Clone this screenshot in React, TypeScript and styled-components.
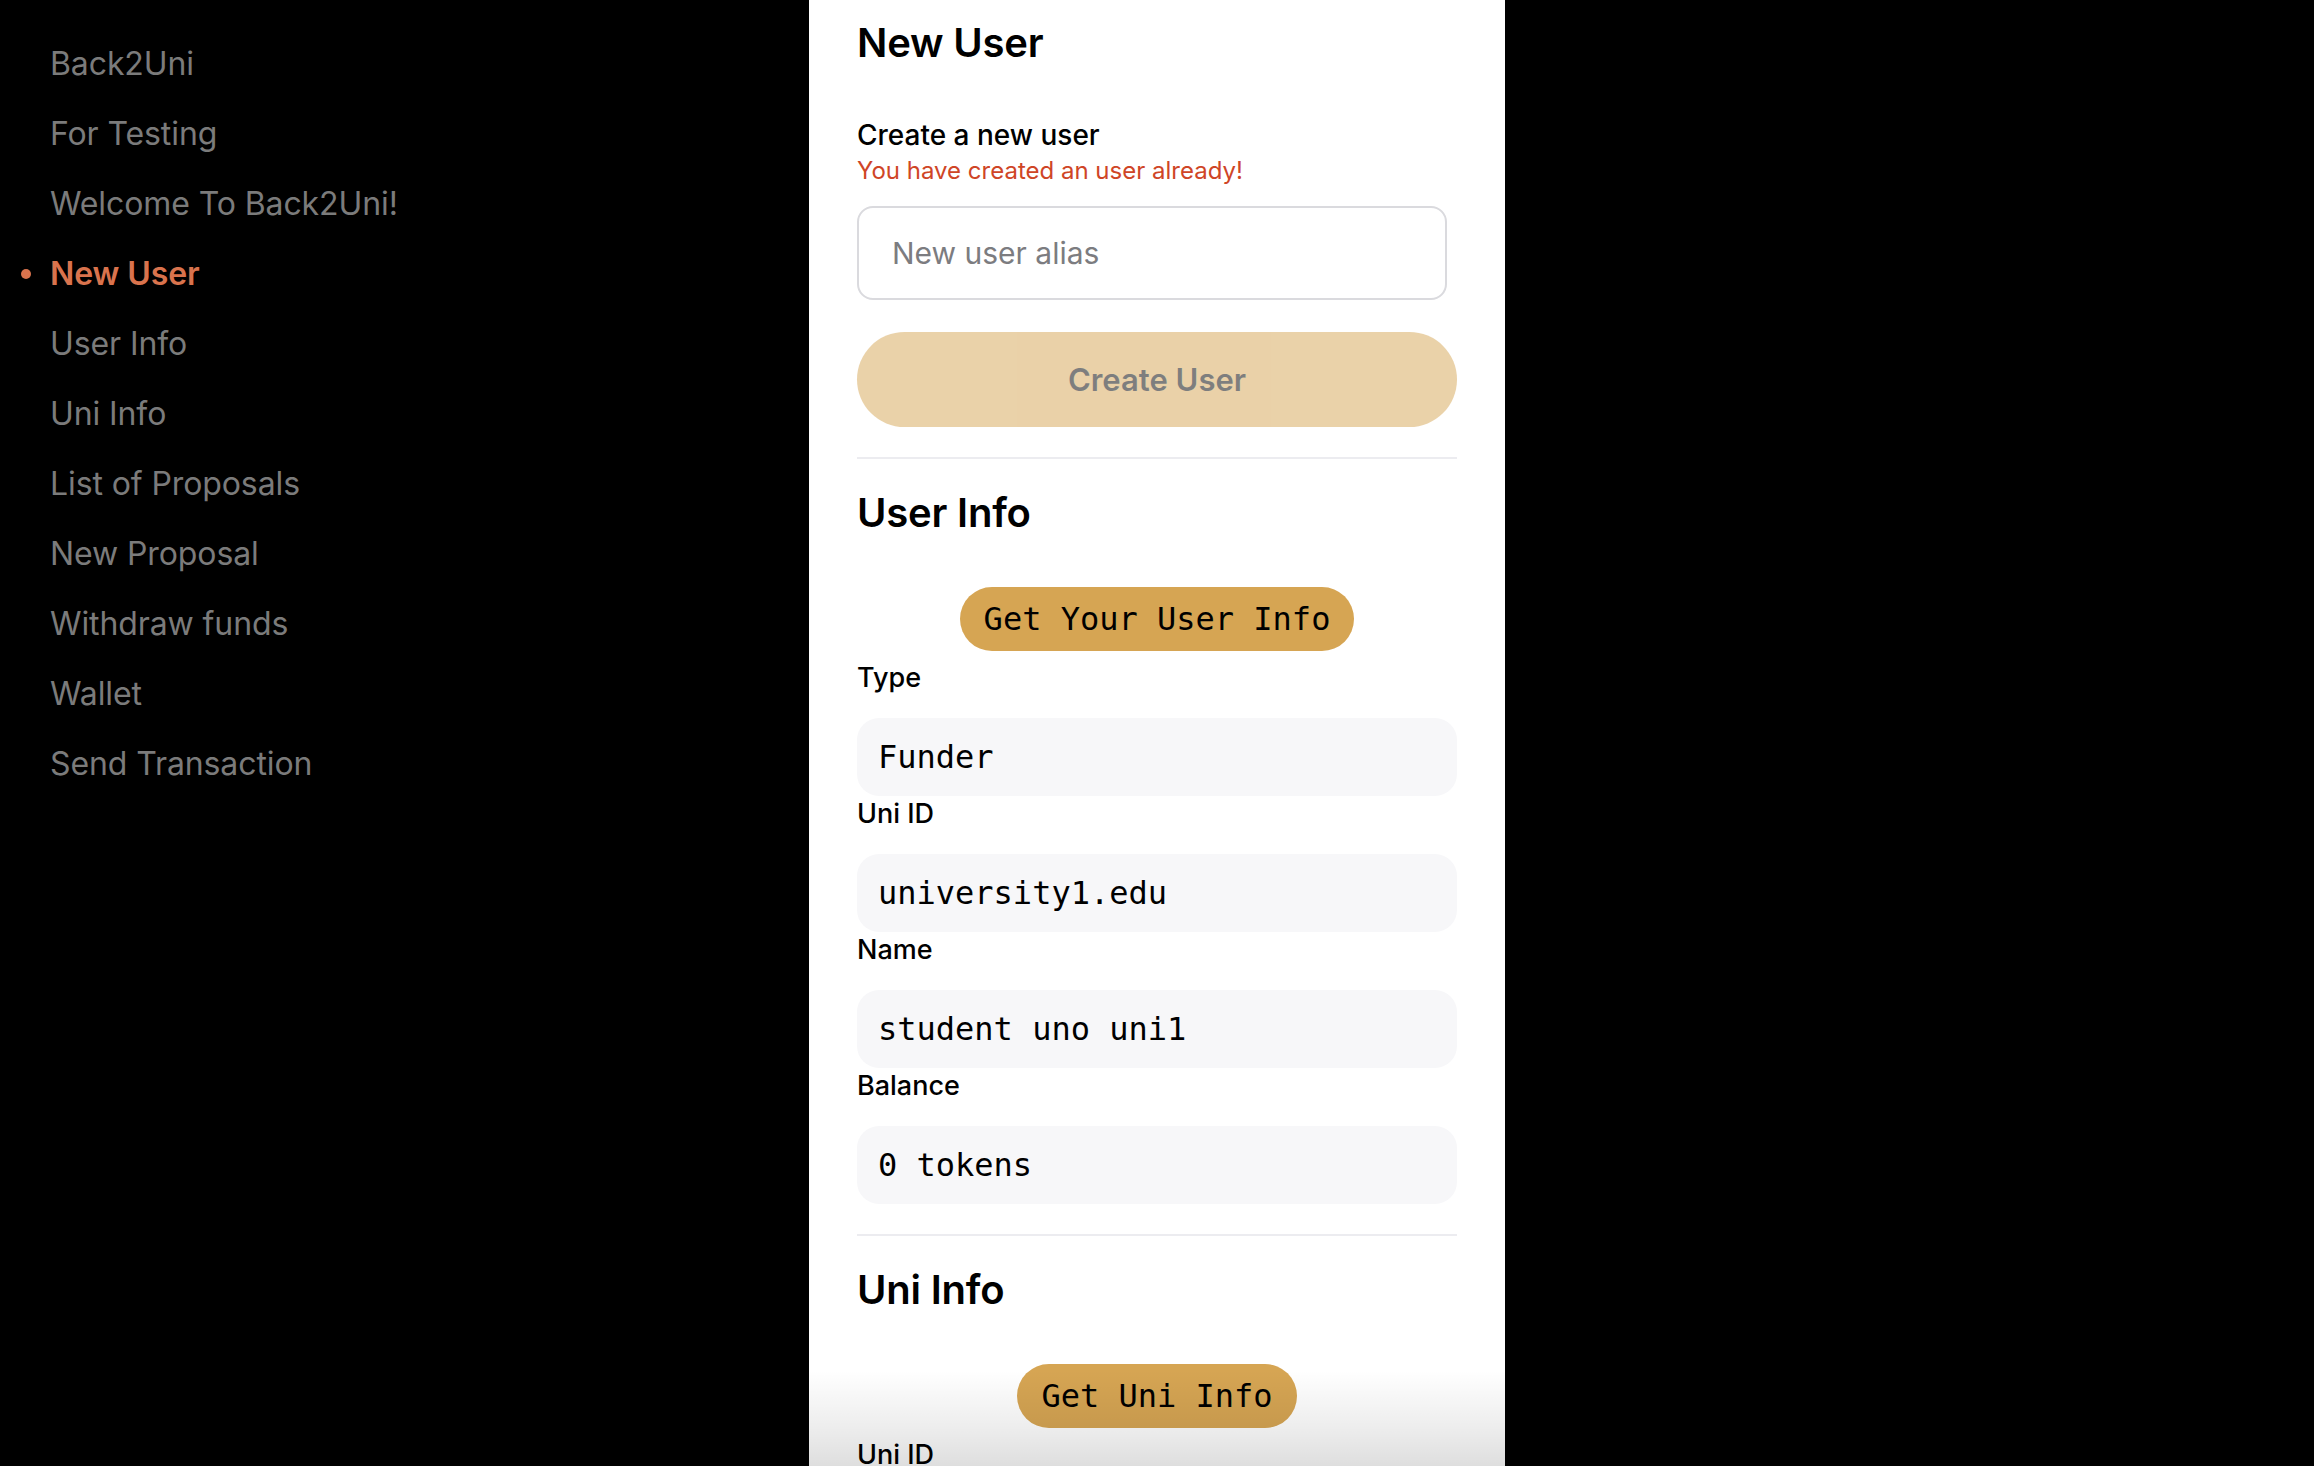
import React, { useState } from 'react';
import styled, { createGlobalStyle } from 'styled-components';

const GlobalStyle = createGlobalStyle`
  html, body {
    margin: 0;
    padding: 0;
    background: #000;
    font-family: Inter, "Noto Sans", "Liberation Sans", sans-serif;
  }
  * {
    box-sizing: border-box;
  }
`;

const Layout = styled.div`
  display: grid;
  grid-template-columns: 1fr 696px 1fr;
  height: 100vh;
  overflow: hidden;
  background: #000;
`;

const Sidebar = styled.nav`
  display: flex;
  flex-direction: column;
  padding: 29px 0 0 50px;
`;

const NavItem = styled.a<{ active?: boolean }>`
  position: relative;
  display: block;
  height: 70px;
  line-height: 70px;
  font-size: 32px;
  font-weight: ${(props) => (props.active ? 600 : 400)};
  color: ${(props) => (props.active ? '#d9734d' : '#7b7b7b')};
  text-decoration: none;
  cursor: pointer;
  white-space: nowrap;
  letter-spacing: -0.1px;

  &::before {
    content: '';
    display: ${(props) => (props.active ? 'block' : 'none')};
    position: absolute;
    left: -29px;
    top: 30px;
    width: 10px;
    height: 10px;
    border-radius: 50%;
    background: #d9734d;
  }
`;

const Panel = styled.main`
  position: relative;
  background: #fff;
  overflow: hidden;
`;

const Scroll = styled.div`
  padding: 19px 48px 0 48px;
  height: 100%;
  overflow: hidden;
`;

const BottomFade = styled.div`
  position: absolute;
  left: 0;
  right: 0;
  bottom: 0;
  height: 96px;
  pointer-events: none;
  background: linear-gradient(
    to bottom,
    rgba(0, 0, 0, 0) 0%,
    rgba(0, 0, 0, 0.07) 60%,
    rgba(0, 0, 0, 0.13) 100%
  );
`;

const Heading = styled.h2`
  margin: 0;
  font-size: 40px;
  line-height: 48px;
  font-weight: 600;
  color: #000;
  letter-spacing: -0.2px;
`;

const Section = styled.section`
  display: flex;
  flex-direction: column;
`;

const Subtitle = styled.div`
  margin-top: 51px;
  font-size: 28px;
  line-height: 34px;
  font-weight: 500;
  color: #000;
`;

const ErrorText = styled.div`
  margin-top: 4px;
  font-size: 24px;
  line-height: 29px;
  color: #cf4526;
`;

const AliasInput = styled.input`
  margin-top: 21px;
  width: 590px;
  height: 94px;
  padding: 0 33px;
  border: 2px solid #dadade;
  border-radius: 16px;
  font-family: inherit;
  font-size: 30px;
  color: #000;
  outline: none;
  background: #fff;

  &::placeholder {
    color: #7c7c80;
  }
`;

const CreateButton = styled.button`
  margin-top: 32px;
  width: 600px;
  height: 95px;
  border: none;
  border-radius: 48px;
  background: #d6a553;
  opacity: 0.5;
  font-family: inherit;
  font-size: 31px;
  font-weight: 600;
  color: #000;
  cursor: not-allowed;
`;

const Divider = styled.hr`
  margin: 30px 0 30px 0;
  border: none;
  height: 2px;
  background: #ececf0;
`;

const FetchButton = styled.button`
  align-self: center;
  margin: 50px 0 9px 0;
  height: 64px;
  padding: 0 24px;
  border: none;
  border-radius: 32px;
  background: #d6a553;
  font-family: "DejaVu Sans Mono", "Liberation Mono", monospace;
  font-size: 32px;
  color: #000;
  cursor: pointer;
`;

const FieldLabel = styled.div`
  font-size: 27px;
  line-height: 36px;
  font-weight: 500;
  color: #000;
`;

const FieldValue = styled.div`
  margin-top: 22px;
  height: 78px;
  display: flex;
  align-items: center;
  padding: 0 21px;
  border-radius: 22px;
  background: #f7f7f9;
  font-family: "DejaVu Sans Mono", "Liberation Mono", monospace;
  font-size: 32px;
  color: #000;
  white-space: pre;
`;

const navItems = [
  'Back2Uni',
  'For Testing',
  'Welcome To Back2Uni!',
  'New User',
  'User Info',
  'Uni Info',
  'List of Proposals',
  'New Proposal',
  'Withdraw funds',
  'Wallet',
  'Send Transaction',
];

const userFields = [
  { label: 'Type', value: 'Funder' },
  { label: 'Uni ID', value: 'university1.edu' },
  { label: 'Name', value: 'student uno uni1' },
  { label: 'Balance', value: '0 tokens' },
];

function Field({ label, value }: { label: string; value: string }) {
  return (
    <>
      <FieldLabel>{label}</FieldLabel>
      <FieldValue>{value}</FieldValue>
    </>
  );
}

export default function App() {
  const [alias, setAlias] = useState('');
  const [active, setActive] = useState('New User');

  return (
    <Layout>
      <GlobalStyle />
      <Sidebar>
        {navItems.map((item) => (
          <NavItem
            key={item}
            active={item === active}
            onClick={() => setActive(item)}
          >
            {item}
          </NavItem>
        ))}
      </Sidebar>
      <Panel>
        <Scroll>
          <Section>
            <Heading>New User</Heading>
            <Subtitle>Create a new user</Subtitle>
            <ErrorText>You have created an user already!</ErrorText>
            <AliasInput
              placeholder="New user alias"
              value={alias}
              onChange={(e) => setAlias(e.target.value)}
            />
            <CreateButton disabled>Create User</CreateButton>
          </Section>
          <Divider />
          <Section>
            <Heading>User Info</Heading>
            <FetchButton>Get Your User Info</FetchButton>
            {userFields.map((f) => (
              <Field key={f.label} label={f.label} value={f.value} />
            ))}
          </Section>
          <Divider />
          <Section>
            <Heading>Uni Info</Heading>
            <FetchButton>Get Uni Info</FetchButton>
            <Field label="Uni ID" value="university1.edu" />
          </Section>
        </Scroll>
        <BottomFade />
      </Panel>
      <div />
    </Layout>
  );
}
